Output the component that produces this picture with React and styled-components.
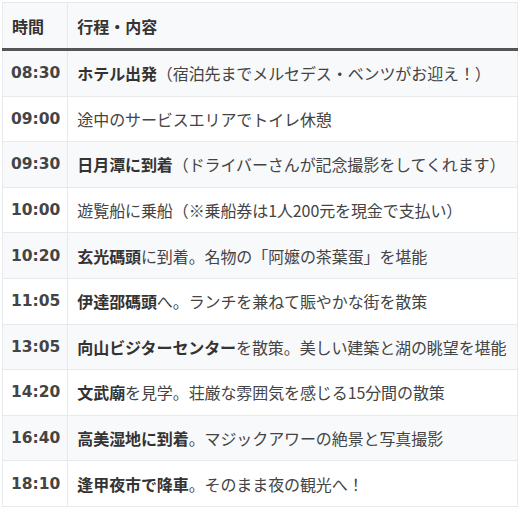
import styled, { createGlobalStyle } from 'styled-components'

const Global = createGlobalStyle`
  body {
    margin: 0;
    background: #fff;
    font-family: "Noto Sans CJK JP", "Noto Sans", sans-serif;
  }
`

const Wrap = styled.div`
  padding: 2px 0 0 2px;
`

const Table = styled.table`
  width: 516px;
  border-collapse: collapse;
  border: 1px solid #e8e9ec;
  font-size: 16px;
  color: #444;
`

const Head = styled.th`
  text-align: left;
  font-weight: bold;
  color: #333;
  background: #f8f9fb;
  padding: 0 9px;
  height: 45px;
  border-left: 1px solid #e8e9ec;
  border-bottom: 3px solid #555;
  width: ${p => p.$w || 'auto'};
`

const Row = styled.tr`
  background: ${p => (p.$odd ? '#f8f9fb' : '#fff')};
  border-top: 1px solid #e8e9ec;
`

const Time = styled.td`
  font-family: "DejaVu Sans", "Noto Sans CJK JP", sans-serif;
  font-weight: bold;
  font-size: 15.5px;
  color: #444;
  padding: 0 7px 0 8px;
  height: 44.6px;
  border-right: 1px solid #e8e9ec;
`

const Detail = styled.td`
  padding: 0 8px 0 9px;
  line-height: 20px;
  white-space: nowrap;
  letter-spacing: -0.1px;

  strong {
    color: #333;
  }
`

const plan = [
  ['08:30', 'ホテル出発', '（宿泊先までメルセデス・ベンツがお迎え！）'],
  ['09:00', '', '途中のサービスエリアでトイレ休憩'],
  ['09:30', '日月潭に到着', '（ドライバーさんが記念撮影をしてくれます）'],
  ['10:00', '', '遊覧船に乗船（※乗船券は1人200元を現金で支払い）'],
  ['10:20', '玄光碼頭', 'に到着。名物の「阿嬤の茶葉蛋」を堪能'],
  ['11:05', '伊達邵碼頭', 'へ。ランチを兼ねて賑やかな街を散策'],
  ['13:05', '向山ビジターセンター', 'を散策。美しい建築と湖の眺望を堪能'],
  ['14:20', '文武廟', 'を見学。荘厳な雰囲気を感じる15分間の散策'],
  ['16:40', '高美湿地に到着', '。マジックアワーの絶景と写真撮影'],
  ['18:10', '逢甲夜市で降車', '。そのまま夜の観光へ！'],
]

export default function App() {
  return (
    <Wrap>
      <Global />
      <Table>
        <thead>
          <tr>
            <Head $w="46px">時間</Head>
            <Head>行程・内容</Head>
          </tr>
        </thead>
        <tbody>
          {plan.map(([time, bold, rest], i) => (
            <Row key={time} $odd={i % 2 === 0}>
              <Time>{time}</Time>
              <Detail>
                {bold && <strong>{bold}</strong>}
                {rest}
              </Detail>
            </Row>
          ))}
        </tbody>
      </Table>
    </Wrap>
  )
}
